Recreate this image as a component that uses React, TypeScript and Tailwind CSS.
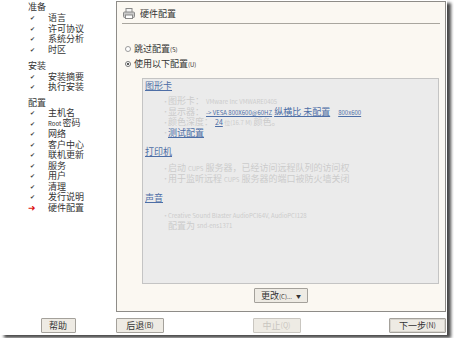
import React from "react";

const font = { fontFamily: '"Noto Sans CJK SC", "Noto Sans", sans-serif' };

const Check = () => (
  <span className="w-[20px] pl-[2px] text-[6px] text-[#444]">✔</span>
);

const SideItem = ({ label, current }: { label: React.ReactNode; current?: boolean }) => (
  <div className="flex items-center h-[10.5px]">
    {current ? (
      <span className="w-[20px] text-[9px] leading-none text-[#d11]">➜</span>
    ) : (
      <Check />
    )}
    <span className="text-[#333]">{label}</span>
  </div>
);

const Btn = ({
  children,
  className = "",
  disabled,
}: {
  children: React.ReactNode;
  className?: string;
  disabled?: boolean;
}) => (
  <button
    className={
      "h-[15px] flex items-center justify-center border rounded-[1px] text-[9px] leading-none bg-[#eeebe4] " +
      (disabled ? "border-[#c9c6c0] text-[#c9c6c0] " : "border-[#a4a19b] text-[#333] ") +
      className
    }
  >
    {children}
  </button>
);

const Bullet = ({ children, className = "" }: { children: React.ReactNode; className?: string }) => (
  <div className={"flex items-center h-[10.5px] leading-[9px] pl-[17px] " + className}>
    <span className="w-[6px] text-[7px] text-[#cfcfcf]">•</span>
    <span className="whitespace-nowrap">{children}</span>
  </div>
);

const Link = ({ children, className = "" }: { children: React.ReactNode; className?: string }) => (
  <span className={"underline text-[#4d6ea6] " + className}>{children}</span>
);

export default function App() {
  return (
    <div className="w-[454px] h-[338px] bg-white" style={font}>
      <div className="w-[447px] h-[335px] bg-white shadow-[4px_3px_3px_#4a4a4a] flex flex-col">
        <div className="flex h-[313px]">
          {/* sidebar */}
          <div className="w-[116px] pt-[2px] pl-[28px] text-[9px] leading-[10.5px] text-[#333]">
            <div className="h-[11px] flex items-center">准备</div>
            <SideItem label="语言" />
            <SideItem label="许可协议" />
            <SideItem label="系统分析" />
            <SideItem label="时区" />
            <div className="mt-[6px] h-[10.5px] flex items-center">安装</div>
            <SideItem label="安装摘要" />
            <SideItem label="执行安装" />
            <div className="mt-[5px] h-[10.5px] flex items-center">配置</div>
            <SideItem label="主机名" />
            <SideItem
              label={
                <>
                  <span className="text-[6px]">Root </span>密码
                </>
              }
            />
            <SideItem label="网络" />
            <SideItem label="客户中心" />
            <SideItem label="联机更新" />
            <SideItem label="服务" />
            <SideItem label="用户" />
            <SideItem label="清理" />
            <SideItem label="发行说明" />
            <SideItem label="硬件配置" current />
          </div>

          {/* panel */}
          <div className="mt-[1px] w-[330px] h-[311px] border border-[#8e8c88] bg-[#fbf8f2] px-[5px] flex flex-col">
            <div className="flex items-center h-[21px] pt-[2px] pl-[1px] gap-[5px] text-[9px] text-[#333]">
              <svg width="12" height="11" viewBox="0 0 12 11">
                <rect x="3" y="0.5" width="6" height="4" fill="#f4f4f4" stroke="#8a8a8a" />
                <rect x="0.5" y="4" width="11" height="5.5" rx="1" fill="#c9c9c9" stroke="#8a8a8a" />
                <rect x="2.5" y="7" width="7" height="3.5" fill="#fff" stroke="#8a8a8a" />
              </svg>
              <span>硬件配置</span>
            </div>
            <div className="h-[2px] border-t border-[#a9a69f] border-b-white" />
            <div className="mt-[17px] pl-[3px] text-[9px] text-[#333] leading-[13.5px]">
              <div className="flex items-center gap-[3px]">
                <span className="w-[6px] h-[6px] rounded-full border border-[#9a9a9a] bg-white" />
                <span>
                  跳过配置<span className="text-[6px]">(S)</span>
                </span>
              </div>
              <div className="flex items-center gap-[3px]">
                <span className="w-[6px] h-[6px] rounded-full border border-[#777] bg-white flex items-center justify-center">
                  <span className="w-[2px] h-[2px] rounded-full bg-[#222]" />
                </span>
                <span>
                  使用以下配置<span className="text-[6px]">(U)</span>
                </span>
              </div>
            </div>

            {/* inner box */}
            <div className="mt-[7px] ml-[20px] mr-[1px] h-[206px] border border-[#c4c4c4] bg-[#ebebeb] pt-[1px] pl-[2px] text-[9px] text-[#cbcbcb]">
              <div className="h-[12px] leading-[12px]">
                <Link>图形卡</Link>
              </div>
              <div className="mt-[4px]">
                <Bullet>
                  图形卡： <span className="text-[6px]">VMware Inc VMWARE0405</span>
                </Bullet>
                <Bullet>
                  显示器： <Link className="text-[6px]">-&gt; VESA 800X600@60HZ</Link>{" "}
                  <Link className="text-[#3d5f9b]">纵横比 未配置</Link>{" "}
                  <Link className="text-[6px] ml-[6px]">800x600</Link>
                </Bullet>
                <Bullet>
                  颜色深度： <Link className="text-[7px]">24</Link>
                  <span className="text-[6px]"> 位(16.7 M) </span>颜色。
                </Bullet>
                <Bullet>
                  <Link>测试配置</Link>
                </Bullet>
              </div>
              <div className="mt-[8px] h-[12px] leading-[12px]">
                <Link>打印机</Link>
              </div>
              <div className="mt-[5px]">
                <Bullet>
                  启动 <span className="text-[6px]">CUPS</span> 服务器，已经访问远程队列的访问权
                </Bullet>
                <Bullet>
                  用于监听远程 <span className="text-[6px]">CUPS</span> 服务器的端口被防火墙关闭
                </Bullet>
              </div>
              <div className="mt-[8px] h-[12px] leading-[12px]">
                <Link>声音</Link>
              </div>
              <div className="mt-[6px]">
                <Bullet>
                  <span className="text-[6px]">Creative Sound Blaster AudioPCI64V, AudioPCI128</span>
                </Bullet>
                <div className="pl-[23px] h-[10.5px] leading-[9px] flex items-center whitespace-nowrap">
                  配置为 <span className="text-[6px] ml-[2px]">snd-ens1371</span>
                </div>
              </div>
            </div>

            <div className="mt-[4px] flex justify-center">
              <Btn className="w-[54px] gap-[4px]">
                <span>
                  更改<span className="text-[6px]">(C)...</span>
                </span>
                <span className="text-[5px]">▼</span>
              </Btn>
            </div>
          </div>
        </div>

        {/* bottom buttons */}
        <div className="flex mt-[5px]">
          <div className="w-[116px] flex justify-center">
            <Btn className="w-[35px]">帮助</Btn>
          </div>
          <div className="w-[330px] flex justify-between">
            <Btn className="w-[48px]">
              后退<span className="text-[7px]">(B)</span>
            </Btn>
            <Btn className="w-[48px]" disabled>
              中止<span className="text-[7px]">(Q)</span>
            </Btn>
            <Btn className="w-[57px] border-[#5f5d59] shadow-[inset_0_0_0_1px_#d8d5ce]">
              下一步<span className="text-[7px]">(N)</span>
            </Btn>
          </div>
        </div>
      </div>
    </div>
  );
}
